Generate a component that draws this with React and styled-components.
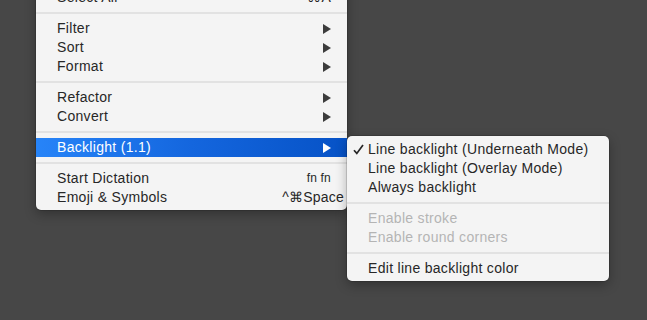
import React from 'react'
import styled, { createGlobalStyle } from 'styled-components'

const GlobalStyle = createGlobalStyle`
	html, body {
		margin: 0;
		background: #474747;
		overflow: hidden;
	}
	body {
		font-family: "Liberation Sans", Arial, sans-serif;
		-webkit-font-smoothing: antialiased;
	}
`

const Canvas = styled.div`
	display: flex;
	align-items: flex-start;
	width: 647px;
	height: 320px;
	padding-left: 36px;
	box-sizing: border-box;
`

const Menu = styled.div`
	display: flex;
	flex-direction: column;
	width: ${props => props.width}px;
	margin-top: ${props => props.top}px;
	padding: 4px 0 ${props => props.bottom}px;
	background: #f4f4f4;
	border-radius: 5px;
	box-shadow: 0 0 0 0.5px rgba(0, 0, 0, 0.25), 0 4px 12px rgba(0, 0, 0, 0.3);
	box-sizing: border-box;
	flex-shrink: 0;
`

const Row = styled.div`
	display: flex;
	align-items: center;
	height: 19px;
	padding: 0 16px 0 ${props => props.indent}px;
	font-size: 14px;
	line-height: 19px;
	letter-spacing: 0.3px;
	color: ${props => (props.active ? '#fff' : props.disabled ? '#b4b4b4' : '#272727')};
	background: ${props =>
		props.active ? 'linear-gradient(90deg, #2784f8 0%, #1466de 50%, #0652c6 100%)' : 'transparent'};
	white-space: nowrap;
`

const Check = styled.span`
	width: 15px;
	margin-left: -15px;
	display: flex;
	align-items: center;
`

const Label = styled.span`
	flex: 1;
`

const Shortcut = styled.span`
	font-size: ${props => props.size || 14}px;
	margin-right: ${props => props.overhang || 0}px;
	letter-spacing: 0.2px;
`

const Separator = styled.div`
	height: 2px;
	margin: 5px 0;
	background: #e2e2e2;
`

const Arrow = ({ color }) => (
	<svg width="8" height="10" viewBox="0 0 8 10">
		<polygon points="0,0 8,5 0,10" fill={color} />
	</svg>
)

const Tick = () => (
	<svg width="11" height="11" viewBox="0 0 11 11">
		<path d="M1 6.2 L3.8 9.4 L10 1" fill="none" stroke="#272727" strokeWidth="1.7" />
	</svg>
)

const SubMenu = ({ items, active, disabled, shortcut, overhang, small }) => (
	<Row indent={21} active={active} disabled={disabled}>
		<Label>{items}</Label>
		{shortcut && (
			<Shortcut size={small ? 12 : 14} overhang={overhang}>
				{shortcut}
			</Shortcut>
		)}
		{!shortcut && <Arrow color={active ? '#fff' : '#3c3c3c'} />}
	</Row>
)

const Option = ({ label, checked, disabled }) => (
	<Row indent={21} disabled={disabled}>
		{checked ? (
			<Check>
				<Tick />
			</Check>
		) : null}
		<Label>{label}</Label>
	</Row>
)

const App = () => (
	<>
		<GlobalStyle />
		<Canvas>
			<Menu width={311} top={-16} bottom={3}>
				<SubMenu items="Select All" shortcut="⌘A" />
				<Separator />
				<SubMenu items="Filter" />
				<SubMenu items="Sort" />
				<SubMenu items="Format" />
				<Separator />
				<SubMenu items="Refactor" />
				<SubMenu items="Convert" />
				<Separator />
				<SubMenu items="Backlight (1.1)" active />
				<Separator />
				<SubMenu items="Start Dictation" shortcut="fn fn" small />
				<SubMenu items="Emoji & Symbols" shortcut="^⌘Space" overhang={-13} />
			</Menu>
			<Menu width={262} top={136} bottom={3}>
				<Option label="Line backlight (Underneath Mode)" checked />
				<Option label="Line backlight (Overlay Mode)" />
				<Option label="Always backlight" />
				<Separator />
				<Option label="Enable stroke" disabled />
				<Option label="Enable round corners" disabled />
				<Separator />
				<Option label="Edit line backlight color" />
			</Menu>
		</Canvas>
	</>
)

export default App
